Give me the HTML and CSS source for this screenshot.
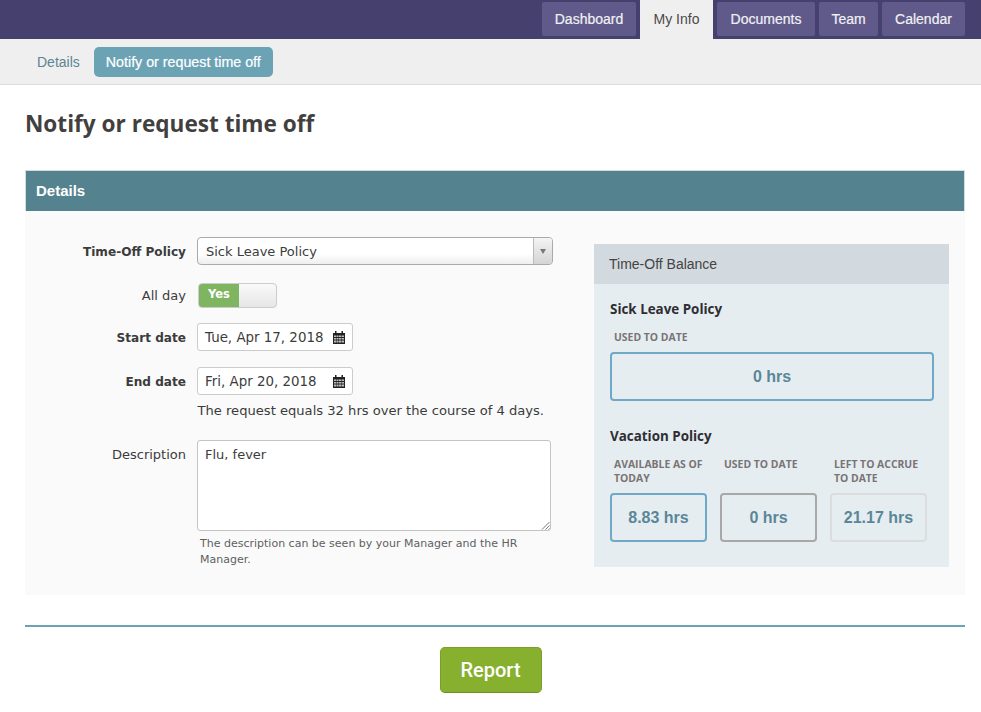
FILE: index.html
```html
<!DOCTYPE html>
<html lang="en">
<head>
<meta charset="utf-8">
<title>Notify or request time off</title>
<link rel="stylesheet" href="styles.css">
</head>
<body>
<header class="topbar">
  <nav class="tabs">
    <a class="tab">Dashboard</a>
    <a class="tab tab-active">My Info</a>
    <a class="tab">Documents</a>
    <a class="tab">Team</a>
    <a class="tab">Calendar</a>
  </nav>
</header>
<nav class="subnav">
  <a class="sub-link">Details</a>
  <a class="sub-pill">Notify or request time off</a>
</nav>
<main class="page">
  <h1 class="title">Notify or request time off</h1>
  <section class="panel">
    <h2 class="panel-head">Details</h2>
    <div class="panel-body">
      <div class="form">
        <div class="row row-policy">
          <label class="label label-bold">Time-Off Policy</label>
          <div class="select">
            <span class="select-text">Sick Leave Policy</span>
            <span class="select-arrow"><i class="caret"></i></span>
          </div>
        </div>
        <div class="row row-toggle">
          <label class="label">All day</label>
          <div class="toggle"><span class="toggle-on">Yes</span><span class="toggle-off"></span></div>
        </div>
        <div class="row row-date">
          <label class="label label-bold">Start date</label>
          <div class="date"><span>Tue, Apr 17, 2018</span>
            <svg class="cal" viewBox="0 0 24 26"><path d="M0 4h4V0h3v4h10V0h3v4h4v22H0z" fill="#222"/><path d="M2 9h4v3H2zM7 9h4v3H7zM12 9h4v3h-4zM17 9h5v3h-5zM2 14h4v3H2zM7 14h4v3H7zM12 14h4v3h-4zM17 14h5v3h-5zM2 19h4v4H2zM7 19h4v4H7zM12 19h4v4h-4zM17 19h5v4h-5z" fill="#bdbdbd"/></svg>
          </div>
        </div>
        <div class="row row-date row-end">
          <label class="label label-bold">End date</label>
          <div class="date"><span>Fri, Apr 20, 2018</span>
            <svg class="cal" viewBox="0 0 24 26"><path d="M0 4h4V0h3v4h10V0h3v4h4v22H0z" fill="#222"/><path d="M2 9h4v3H2zM7 9h4v3H7zM12 9h4v3h-4zM17 9h5v3h-5zM2 14h4v3H2zM7 14h4v3H7zM12 14h4v3h-4zM17 14h5v3h-5zM2 19h4v4H2zM7 19h4v4H7zM12 19h4v4h-4zM17 19h5v4h-5z" fill="#bdbdbd"/></svg>
          </div>
        </div>
        <p class="equals">The request equals 32 hrs over the course of 4 days.</p>
        <div class="row row-desc">
          <label class="label label-desc">Description</label>
          <div class="desc-col">
            <div class="textarea">Flu, fever
              <svg class="grip" viewBox="0 0 9 9"><path d="M8.500 1L1 8.500M8.500 4.500L4.500 8.500M8.500 7.500L7.500 8.500" stroke="#777" stroke-width="1" fill="none"/></svg>
            </div>
            <p class="hint">The description can be seen by your Manager and the HR Manager.</p>
          </div>
        </div>
      </div>
      <aside class="balance">
        <div class="balance-head">Time-Off Balance</div>
        <div class="balance-body">
          <h3 class="policy">Sick Leave Policy</h3>
          <div class="stat stat-wide">
            <div class="stat-label stat-label-one">USED TO DATE</div>
            <div class="stat-box box-blue box-tall">0 hrs</div>
          </div>
          <h3 class="policy policy-second">Vacation Policy</h3>
          <div class="stats">
            <div class="stat">
              <div class="stat-label">AVAILABLE AS OF TODAY</div>
              <div class="stat-box box-blue">8.83 hrs</div>
            </div>
            <div class="stat">
              <div class="stat-label">USED TO DATE</div>
              <div class="stat-box box-grey">0 hrs</div>
            </div>
            <div class="stat">
              <div class="stat-label">LEFT TO ACCRUE TO DATE</div>
              <div class="stat-box box-light">21.17 hrs</div>
            </div>
          </div>
        </div>
      </aside>
    </div>
  </section>
  <hr class="rule">
  <div class="actions"><button class="report" type="button">Report</button></div>
</main>
</body>
</html>
```
FILE: styles.css
```css
* { box-sizing: border-box; }
html, body { margin: 0; padding: 0; background: #fff; }
body { font-family: "DejaVu Sans", Verdana, sans-serif; font-size: 13px; color: #3c3c3c; height: 712px; overflow: hidden; }

.topbar { height: 39px; background: #46406f; display: flex; justify-content: flex-end; padding-right: 16px; }
.tabs { display: grid; grid-template-columns: 94px 73px 98px 59px 83px; gap: 4px; align-items: start; }
.tab { margin-top: 2px; height: 34px; text-align: center; background: #5f5a89; border-radius: 2px; color: #f1f1f5; font: 14px/34px "Liberation Sans", Arial, sans-serif; -webkit-text-stroke: .2px #f1f1f5; }
.tab-active { margin-top: 0; height: 39px; line-height: 39px; background: #efefef; color: #4a4a4a; border-radius: 0; -webkit-text-stroke: 0; }

.subnav { height: 46px; background: #efefef; border-bottom: 1px solid #dcdcdc; display: flex; align-items: flex-start; padding: 8px 0 0 37px; gap: 14px; font-family: "Liberation Sans", Arial, sans-serif; font-size: 14px; }
.sub-link { line-height: 30px; color: #5d8493; }
.sub-pill { height: 30px; line-height: 30px; padding: 0 12px; background: #6ba3b5; color: #fff; border-radius: 5px; font-size: 14.25px; -webkit-text-stroke: .2px #fff; }

.page { padding: 0 16px 0 25px; }
.title { margin: 0; padding-top: 23px; height: 85px; font: 700 22.6px/32px "Open Sans", sans-serif; color: #423f3f; }

.panel { background: #fafafa; height: 425px; }
.panel-head { margin: 0; height: 41px; padding-left: 10px; background: #54838f; border: 1px solid #d6dcde; border-width: 1px 1px 0; color: #fff; font: 700 15px/40px "Liberation Sans", Arial, sans-serif; }
.panel-body { display: flex; justify-content: space-between; padding: 33px 16px 0 0; }

.form { width: 528px; }
.row { display: flex; }
.label { width: 161px; flex: none; text-align: right; color: #3c3c3c; margin-right: 11px; }
.label-bold { font-weight: 700; font-size: 12.1px; padding-top: 2px; }

.row-policy { height: 28px; margin-top: -7px; align-items: center; }
.select { width: 356px; height: 28px; border: 1px solid #aaa; border-radius: 4px; background: linear-gradient(#fff 60%, #eee); display: flex; justify-content: space-between; align-items: stretch; }
.select-text { padding-left: 8px; line-height: 27px; }
.select-arrow { width: 19px; border-left: 1px solid #bbb; background: linear-gradient(#f4f4f4, #d4d4d4); border-radius: 0 3px 3px 0; display: flex; align-items: center; justify-content: center; }
.caret { width: 0; height: 0; border: 3px solid transparent; border-top: 5px solid #777; border-bottom: 0; }

.row-toggle { margin-top: 17px; height: 26px; align-items: center; }
.toggle { width: 79px; height: 25px; margin-left: 1px; border: 1px solid #ccc; border-radius: 4px; display: flex; overflow: hidden; background: linear-gradient(#fafafa, #e6e6e6); }
.toggle-on { width: 40px; background: #7fb560; color: #fff; font-weight: 700; font-size: 11.5px; line-height: 21px; text-align: center; }
.toggle-off { flex: 1; }

.row-date { margin-top: 15px; height: 28px; align-items: center; }
.row-end { margin-top: 16px; }
.date { width: 156px; height: 28px; border: 1px solid #ccc; border-radius: 3px; background: #fff; display: flex; justify-content: space-between; align-items: center; padding: 0 7px; font-size: 13.4px; }
.cal { width: 12px; height: 13px; display: block; }

.equals { margin: 8px 0 0 172.500px; line-height: 16px; font-size: 13.1px; }

.row-desc { margin-top: 21px; }
.label-desc { padding-top: 7px; line-height: 16px; }
.desc-col { width: 354px; }
.textarea { position: relative; height: 91px; border: 1px solid #c4c4c4; border-radius: 3px; background: #fff; padding: 6px 7px; line-height: 16px; }
.grip { position: absolute; right: 0; bottom: 0; width: 9px; height: 9px; }
.hint { margin: 5px 0 0 3px; font-size: 11px; line-height: 16px; color: #5f5f5f; }

.balance { width: 355px; height: 323px; background: #e6edf1; }
.balance-head { height: 40px; padding-left: 15px; background: #d2d9df; font: 14px/40px "Liberation Sans", Arial, sans-serif; color: #444; }
.balance-body { padding: 16px 15px 0 16px; }
.policy { margin: 0; font: 700 13.4px/18px "Open Sans", sans-serif; color: #2e2e33; }
.policy-second { margin-top: 26px; }
.stat-wide { margin-top: 12px; }
.stats { display: grid; grid-template-columns: repeat(3, 97px); gap: 13px; margin-top: 12px; }
.stat { display: flex; flex-direction: column; }
.stat-label { font: 700 10.4px/14px "Open Sans", sans-serif; color: #787474; height: 28px; padding-left: 4px; margin-bottom: 8px; }
.stat-label-one { height: 14px; }
.stat-box { height: 49px; border: 2px solid; border-radius: 4px; display: flex; align-items: center; justify-content: center; font: 700 16px "Liberation Sans", Arial, sans-serif; color: #5a8798; }
.box-tall { width: 324px; }
.box-blue { border-color: #6fa9c6; }
.box-grey { border-color: #a8a8a8; }
.box-light { border-color: #dadcde; }

.rule { margin: 30px 0 0; border: 0; height: 2px; background: #6ba3b5; }
.actions { display: flex; justify-content: center; margin-top: 20px; padding-right: 9px; }
.report { width: 102px; height: 46px; border: 1px solid #7a9f2c; border-bottom-color: #6d9025; border-radius: 5px; background: #86b02d; color: #fff; font: 500 20px "Roboto", sans-serif; padding: 0; }
```
